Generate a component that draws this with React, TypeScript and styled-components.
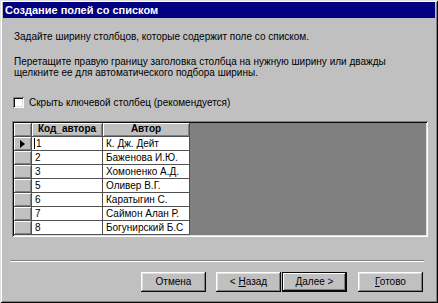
import React from "react";
import styled, { createGlobalStyle } from "styled-components";

const Global = createGlobalStyle`
  html, body {
    margin: 0;
    padding: 0;
    background: #c0c0c0;
  }
  body {
    font-family: "Liberation Sans", Arial, sans-serif;
    font-size: 10px;
    color: #000;
  }
`;

const Window = styled.div`
  width: 438px;
  height: 303px;
  box-sizing: border-box;
  padding: 3px;
  background: #c0c0c0;
  display: flex;
  flex-direction: column;
  box-shadow: inset 1px 1px #dfdfdf, inset -1px -1px #0a0a0a,
    inset 2px 2px #fff, inset -2px -2px #808080;
`;

const TitleBar = styled.div`
  height: 16px;
  margin-top: -1px;
  background: #000080;
  color: #fff;
  font-weight: bold;
  font-size: 11px;
  line-height: 16px;
  padding-left: 2px;
`;

const Content = styled.div`
  flex: 1;
  display: flex;
  flex-direction: column;
  padding: 0 7px 0 7px;
`;

const Text = styled.p<{ top: number }>`
  margin: ${({ top }) => top}px 0 0;
  padding-left: 4px;
  line-height: 11px;
`;

const CheckRow = styled.label`
  display: flex;
  align-items: center;
  gap: 5px;
  margin-top: 18px;
  padding-left: 3px;
  height: 12px;
`;

const CheckBox = styled.span`
  width: 11px;
  height: 11px;
  box-sizing: border-box;
  background: #fff;
  box-shadow: inset 1px 1px #808080, inset -1px -1px #fff,
    inset 2px 2px #0a0a0a, inset -2px -2px #dfdfdf;
`;

const GridFrame = styled.div`
  margin: 13px 0 0 2px;
  width: 416px;
  height: 116px;
  box-sizing: border-box;
  padding: 2px;
  background: #808080;
  box-shadow: inset 1px 1px #808080, inset -1px -1px #fff,
    inset 2px 2px #0a0a0a, inset -2px -2px #dfdfdf;
`;

const Table = styled.div`
  display: grid;
  grid-template-columns: 17px 70px 86px;
  grid-template-rows: 13px repeat(7, 13px);
  gap: 1px;
  width: max-content;
  background: #505050;
  padding-bottom: 1px;
  padding-right: 1px;
`;

const HeadCell = styled.div`
  background: #c0c0c0;
  box-shadow: inset 1px 1px #fff, inset -1px -1px #808080;
  font-weight: bold;
  text-align: center;
  line-height: 9px;
  padding-top: 1px;
`;

const Selector = styled.div`
  background: #c0c0c0;
  box-shadow: inset 1px 1px #fff, inset -1px -1px #808080;
  display: flex;
  align-items: center;
  justify-content: center;
`;

const Cell = styled.div`
  background: #fff;
  line-height: 13px;
  padding-left: 3px;
  white-space: nowrap;
  overflow: hidden;
`;

const Caret = styled.span`
  border-left: 1px solid #000;
  padding-left: 1px;
  margin-left: -1px;
`;

const Separator = styled.div`
  margin: 23px 4px 0 0;
  height: 0;
  border-top: 1px solid #808080;
  border-bottom: 1px solid #fff;
`;

const Buttons = styled.div`
  display: flex;
  justify-content: flex-end;
  margin-top: 10px;
  padding-right: 5px;
`;

const Button = styled.button<{ primary?: boolean; gapLeft?: number }>`
  all: unset;
  box-sizing: border-box;
  width: 65px;
  height: 20px;
  margin-left: ${({ gapLeft }) => gapLeft ?? 0}px;
  background: #c0c0c0;
  font-family: "Liberation Sans", Arial, sans-serif;
  font-size: 10px;
  text-align: center;
  line-height: 20px;
  box-shadow: ${({ primary }) =>
    primary
      ? "inset 0 0 0 1px #0a0a0a, inset -2px -2px #0a0a0a, inset 2px 2px #fff, inset -3px -3px #808080"
      : "inset -1px -1px #0a0a0a, inset 1px 1px #fff, inset -2px -2px #808080, inset 2px 2px #dfdfdf"};

  u {
    text-decoration: underline;
  }
`;

const rows: [string, string][] = [
  ["1", "К. Дж. Дейт"],
  ["2", "Баженова И.Ю."],
  ["3", "Хомоненко А.Д."],
  ["5", "Оливер В.Г."],
  ["6", "Каратыгин С."],
  ["7", "Саймон Алан Р."],
  ["8", "Богунирский Б.С"],
];

export default function App() {
  return (
    <>
      <Global />
      <Window>
        <TitleBar>Создание полей со списком</TitleBar>
        <Content>
          <Text top={13}>
            Задайте ширину столбцов, которые содержит поле со списком.
          </Text>
          <Text top={14}>
            Перетащите правую границу заголовка столбца на нужную ширину или
            дважды
            <br />
            щелкните ее для автоматического подбора ширины.
          </Text>
          <CheckRow>
            <CheckBox />
            Скрыть ключевой столбец (рекомендуется)
          </CheckRow>
          <GridFrame>
            <Table>
              <HeadCell />
              <HeadCell>Код_автора</HeadCell>
              <HeadCell>Автор</HeadCell>
              {rows.map(([id, name], i) => (
                <React.Fragment key={id}>
                  <Selector>
                    {i === 0 && (
                      <svg width="5" height="8" viewBox="0 0 5 8">
                        <path d="M0 0 L5 4 L0 8 Z" fill="#000" />
                      </svg>
                    )}
                  </Selector>
                  <Cell>{i === 0 ? <Caret>{id}</Caret> : id}</Cell>
                  <Cell>{name}</Cell>
                </React.Fragment>
              ))}
            </Table>
          </GridFrame>
          <Separator />
          <Buttons>
            <Button>Отмена</Button>
            <Button gapLeft={10}>
              &lt; <u>Н</u>азад
            </Button>
            <Button primary gapLeft={1}>
              <u>Д</u>алее &gt;
            </Button>
            <Button gapLeft={11}>
              <u>Г</u>отово
            </Button>
          </Buttons>
        </Content>
      </Window>
    </>
  );
}
